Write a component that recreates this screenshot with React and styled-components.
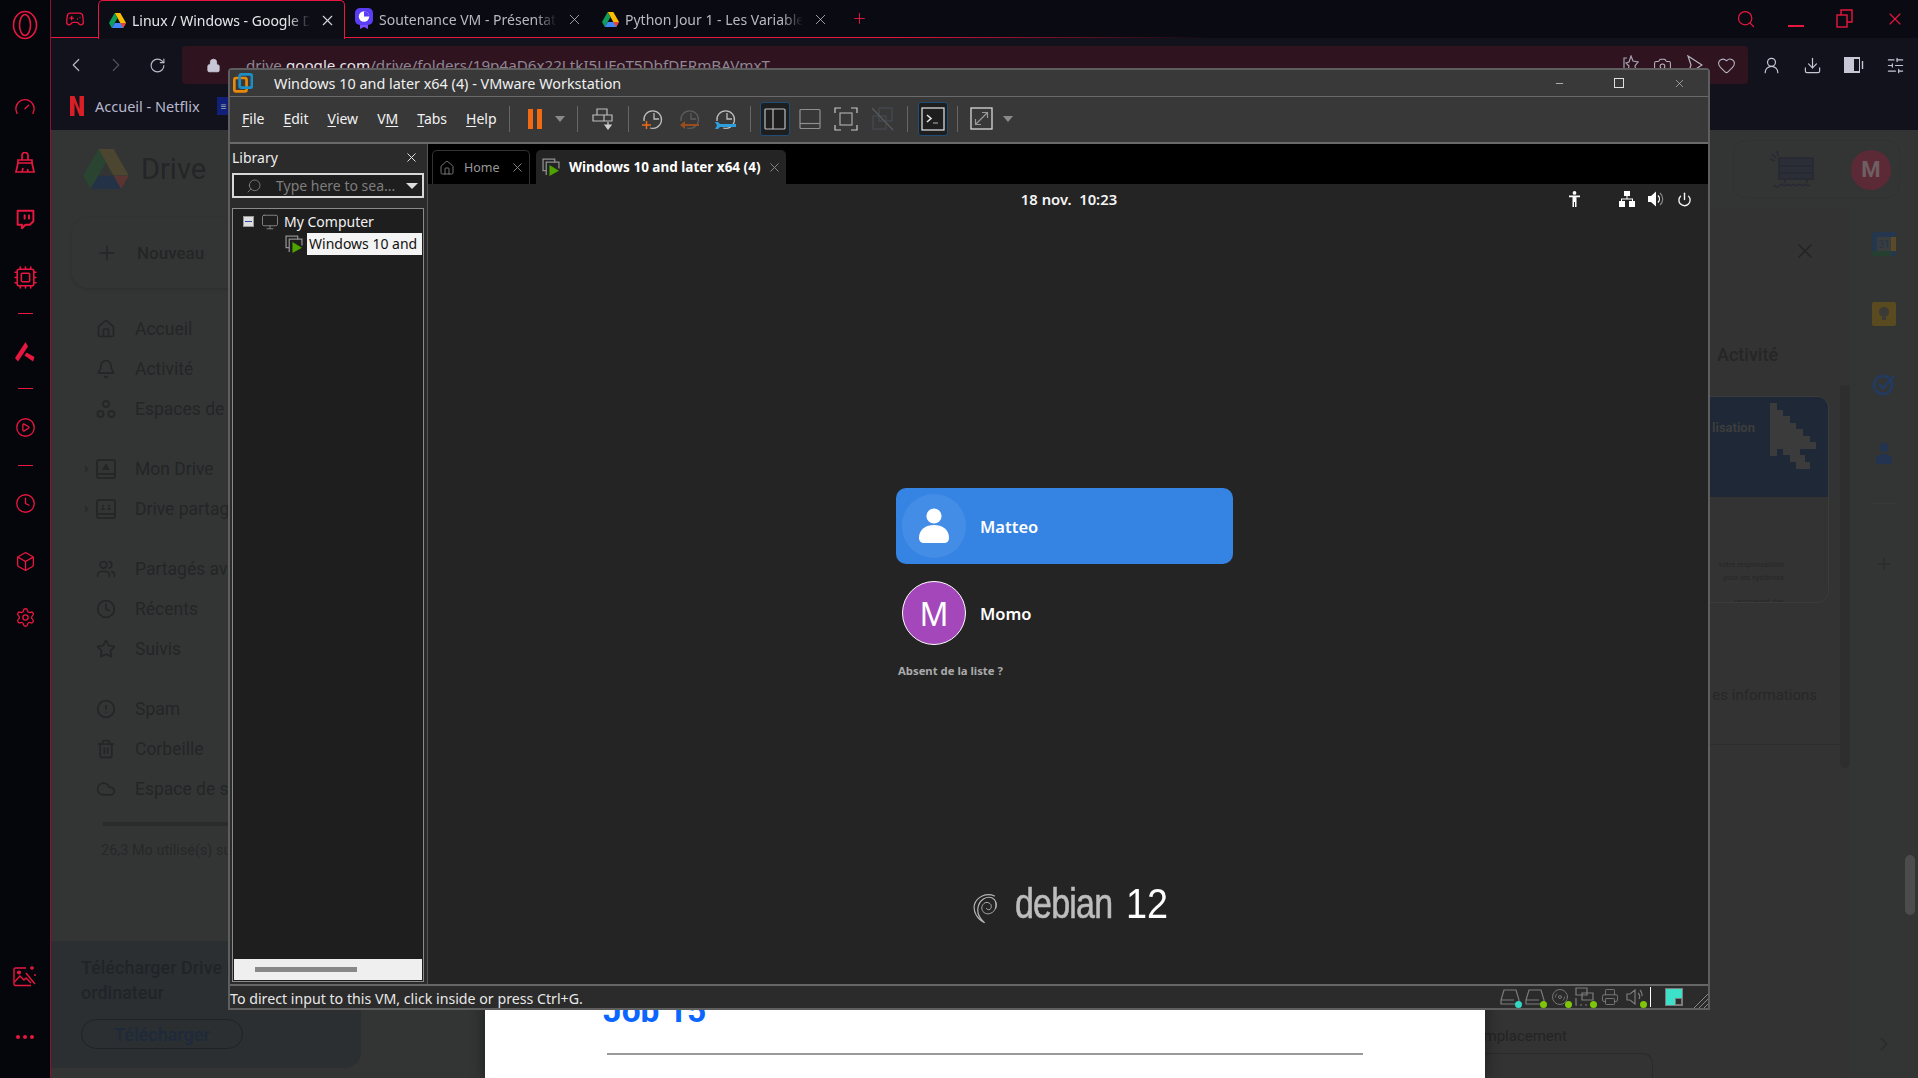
import React from 'react';
import styled, { createGlobalStyle } from 'styled-components';
import {
  Gamepad2, Gauge, Twitch, Cpu, CirclePlay, Clock, Box, Settings, Search, ChevronLeft, ChevronRight,
  RotateCw, Lock, Camera, Heart, UserRound, Download, SlidersHorizontal, X, Plus, Minus, Home as HomeIcon,
  Bell, Users, Star, CircleAlert, Trash2, Cloud, Power, Printer, Disc3, Monitor,
} from 'lucide-react';

const RED = '#e8173f';
const WIN = '"Noto Sans", "Open Sans", sans-serif';
const DIM = '#232526';

const Global = createGlobalStyle`
  html, body { margin: 0; padding: 0; height: 100%; background: #05050c; overflow: hidden; }
  * { box-sizing: border-box; }
`;

const Screen = styled.div`
  position: relative;
  width: 1918px;
  height: 1078px;
  display: flex;
  overflow: hidden;
  font-family: ${WIN};
`;

/* Opera GX rail */
const Rail = styled.aside`
  width: 51px;
  flex: none;
  display: flex;
  flex-direction: column;
  align-items: center;
  background: #05050c;
  border-right: 1px solid #8c1330;
  color: ${RED};
  padding-top: 13px;
`;

const RailItem = styled.div`
  height: 24px;
  display: flex;
  align-items: center;
  justify-content: center;
  flex: none;
  margin-top: ${(p) => p.$mt || 0}px;
`;

const RailDash = styled.div`
  width: 15px;
  height: 1px;
  flex: none;
  background: ${RED};
  margin-top: ${(p) => p.$mt || 0}px;
`;

const Browser = styled.div`
  flex: 1;
  min-width: 0;
  display: flex;
  flex-direction: column;
`;

const TabStrip = styled.div`
  height: 38px;
  flex: none;
  display: flex;
  align-items: stretch;
  background: #0a0a12;
  position: relative;
  border-bottom: 1px solid transparent;
  border-image: linear-gradient(90deg, ${RED} 0, ${RED} 45%, #0a0a12 62%) 1;
`;

const GameSlot = styled.div`
  width: 47px;
  display: flex;
  align-items: center;
  justify-content: center;
  color: ${RED};
`;

const Tab = styled.div`
  width: 247px;
  height: ${(p) => (p.$active ? '39px' : '38px')};
  display: flex;
  align-items: center;
  padding-left: 10px;
  font-size: 14px;
  color: ${(p) => (p.$active ? '#e6e6ea' : '#b9b9c2')};
  background: ${(p) => (p.$active ? '#0d0d16' : 'transparent')};
  border: ${(p) => (p.$active ? `1px solid ${RED}` : '0')};
  border-bottom: 0;
  border-radius: ${(p) => (p.$active ? '5px 5px 0 0' : '0')};
  position: relative;
  z-index: 1;
`;

const TabTitle = styled.span`
  width: 178px;
  margin-left: 6px;
  white-space: nowrap;
  overflow: hidden;
  -webkit-mask-image: linear-gradient(90deg, #000 88%, transparent);
  mask-image: linear-gradient(90deg, #000 88%, transparent);
`;

const TabClose = styled.span`
  display: flex;
  margin-left: 9px;
  color: #d8d8de;
`;

const NewTab = styled.div`
  display: flex;
  align-items: center;
  margin-left: 12px;
  color: ${RED};
`;

const WinControls = styled.div`
  margin-left: auto;
  display: flex;
  align-items: center;
  color: ${RED};
  padding-right: 13px;
  gap: 32px;
`;

const MinBar = styled.div`
  width: 16px;
  height: 2px;
  margin-top: 15px;
  background: ${RED};
`;

const NavRow = styled.div`
  height: 47px;
  flex: none;
  display: flex;
  align-items: center;
  background: #12121d;
  color: #c9c6d6;
  padding-left: 5px;
  padding-top: 7px;
`;

const NavBtn = styled.div`
  width: ${(p) => p.$w || 40}px;
  display: flex;
  justify-content: center;
  color: ${(p) => p.$c || '#b9b7c6'};
`;

const Omnibar = styled.div`
  width: 1566px;
  height: 38px;
  margin-left: 4px;
  display: flex;
  align-items: center;
  background: #2f131f;
  border-radius: 4px;
  padding-left: 24px;
  font-size: 15.200px;
  color: #8d8794;
  overflow: hidden;
`;

const UrlHost = styled.span`
  color: #e4e2e8;
`;

const UrlText = styled.span`
  margin-left: 25px;
  white-space: nowrap;
`;

const OmniIcons = styled.div`
  margin-left: auto;
  display: flex;
  align-items: center;
  gap: 14px;
  padding-right: 12px;
  color: #b9b7c6;
`;

const UserIcons = styled.div`
  display: flex;
  align-items: center;
  gap: 22px;
  padding-left: 14px;
  color: #c9c6d6;
`;

const Bookmarks = styled.div`
  height: 45px;
  flex: none;
  display: flex;
  align-items: center;
  background: #12121d;
  padding: 0 0 3px 19px;
  font-size: 14.500px;
  color: #b8b8cc;
`;

const NetflixN = styled.svg`
  width: 14px;
  height: 20px;
  margin-right: 11px;
`;

const BookmarkIcon = styled.div`
  width: 14px;
  height: 18px;
  margin-left: 17px;
  background: #12207a;
  color: #9aa;
  font-size: 10px;
  line-height: 18px;
  text-align: center;
`;

/* Dimmed Google Drive page */
const DrivePage = styled.div`
  flex: 1;
  min-height: 0;
  display: flex;
  flex-direction: column;
  background: #333535;
  font-family: Roboto, "Noto Sans", sans-serif;
  color: ${DIM};
`;

const DriveHeader = styled.header`
  height: 78px;
  flex: none;
  display: flex;
  align-items: flex-start;
  padding: 10px 18px 0 32px;
`;

const DriveLogo = styled.div`
  display: flex;
  align-items: center;
  gap: 12px;
  font-size: 29px;
  padding-top: 9px;
`;

const HeaderPill = styled.div`
  margin-left: auto;
  width: 167px;
  height: 58px;
  display: flex;
  align-items: center;
  justify-content: flex-end;
  gap: 34px;
  padding: 1px 8px 0 0;
  border: 1px solid #303232;
  border-radius: 12px;
`;

const Avatar = styled.div`
  width: 40px;
  height: 40px;
  border-radius: 50%;
  background: #5b2a36;
  color: #6f5f62;
  font-size: 22px;
  font-weight: 700;
  display: flex;
  align-items: center;
  justify-content: center;
`;

const DriveBody = styled.div`
  flex: 1;
  min-height: 0;
  display: flex;
`;

const DriveSide = styled.nav`
  width: 310px;
  flex: none;
  display: flex;
  flex-direction: column;
  padding-top: 10px;
  padding-bottom: 10px;
`;

const NewButton = styled.div`
  width: 190px;
  height: 70px;
  margin-left: 21px;
  margin-bottom: 21px;
  display: flex;
  align-items: center;
  gap: 18px;
  padding-left: 23px;
  border-radius: 16px;
  box-shadow: 0 1px 4px rgba(0, 0, 0, 0.15);
  font-size: 17px;
  font-weight: 500;
`;

const NavGroup = styled.div`
  margin-bottom: 20px;
`;

const NavItem = styled.div`
  position: relative;
  height: 40px;
  display: flex;
  align-items: center;
  gap: 19px;
  padding-left: 45px;
  font-size: 17.500px;
  white-space: nowrap;
  color: ${DIM};

  ${(p) => p.$caret && `
    &::before {
      content: '';
      position: absolute;
      left: 34px;
      top: 16px;
      border-left: 4px solid #2a2c2c;
      border-top: 4px solid transparent;
      border-bottom: 4px solid transparent;
    }
  `}
`;

const StorageBar = styled.div`
  height: 4px;
  width: 240px;
  margin: 13px 0 0 52px;
  background: #2a2c2c;
`;

const StorageText = styled.div`
  margin: 16px 0 0 50px;
  font-size: 14.500px;
  color: #262828;
  white-space: nowrap;
`;

const DownloadPanel = styled.div`
  margin-top: auto;
  height: 127px;
  padding: 14px 30px 0;
  background: #2b2f32;
  border-radius: 0 0 16px 0;
  font-size: 18px;
  font-weight: 500;
  line-height: 25px;
  color: #212427;
`;

const DownloadButton = styled.div`
  width: 162px;
  height: 30px;
  margin-top: 14px;
  border: 1px solid #1f2326;
  border-radius: 15px;
  display: flex;
  align-items: center;
  justify-content: center;
  color: #1e2a3a;
`;

const DocArea = styled.main`
  flex: 1;
  min-width: 0;
  display: flex;
  align-items: flex-end;
  padding-left: 124px;
`;

const DocPage = styled.div`
  position: relative;
  z-index: 1;
  width: 1000px;
  height: 100px;
  flex: none;
  background: #fff;
  box-shadow: 0 0 14px rgba(0, 0, 0, 0.45);
  padding-left: 118px;
`;

const DocTitle = styled.h1`
  margin: 0;
  height: 46px;
  font-family: Roboto, sans-serif;
  font-weight: 700;
  font-size: 33.500px;
  line-height: 66px;
  color: #0b66ff;
`;

const DocRule = styled.div`
  width: 756px;
  height: 2px;
  margin: 29px 0 0 4px;
  background: #9a9a9a;
`;

const Details = styled.aside`
  width: 365px;
  flex: none;
  display: flex;
  flex-direction: column;
  background: #333333;
`;

const DetailsTop = styled.div`
  display: flex;
  padding-left: 225px;
`;

const DetailsColumn = styled.div`
  width: 119px;
  flex: none;
`;

const DetailsClose = styled.div`
  height: 136px;
  padding: 31px 0 0 83px;
  color: #232323;
`;

const ActivityLabel = styled.div`
  padding-left: 7px;
  font-size: 18px;
  font-weight: 500;
  color: #262626;
  height: 52px;
`;

const ActivityCard = styled.div`
  height: 207px;
  border: 1px solid #3a3c3c;
  border-left: 0;
  border-radius: 0 12px 12px 0;
  overflow: hidden;
`;

const CardBanner = styled.div`
  height: 100px;
  display: flex;
  align-items: flex-start;
  background: #1e2836;
  border-radius: 0 8px 0 0;
  color: #3d3d3d;
  font-size: 13px;
  font-weight: 700;
  padding: 23px 0 0 2px;
  gap: 15px;
`;

const CursorSlot = styled.div`
  margin-top: -17px;
  display: flex;
`;

const CardText = styled.div`
  padding: 61px 44px 0 0;
  font-size: 7.500px;
  line-height: 13px;
  white-space: nowrap;
  text-align: right;
  color: #272727;
`;

const CardTextGap = styled.div`
  height: 11px;
`;

const InfoText = styled.div`
  margin-top: 83px;
  padding-right: 12px;
  font-size: 15px;
  text-align: right;
  white-space: nowrap;
  color: #272727;
`;

const InfoRule = styled.div`
  height: 1px;
  margin-top: 40px;
  margin-right: -11px;
  background: #2d2d2d;
`;

const DetailsTrack = styled.div`
  width: 10px;
  height: 383px;
  margin: 177px 0 0 11px;
  border-radius: 0 0 5px 5px;
  background: #2e2e2e;
`;

const PlacementFoot = styled.div`
  margin-top: auto;
  font-size: 15px;
  color: #232323;
`;

const PlacementLabel = styled.div`
  margin-left: -10px;
  height: 26px;
`;

const PlacementBox = styled.div`
  width: 168px;
  height: 25px;
  border: 1px solid #2a2a2a;
  border-bottom: 0;
  border-left: 0;
  border-radius: 0 10px 0 0;
`;

const RightRail = styled.div`
  flex: none;
  width: 68px;
  position: relative;
  display: flex;
  flex-direction: column;
  align-items: center;
  padding: 17px 0 0 0;
  background: #323534;
`;

const RailSlot = styled.div`
  height: 38px;
  margin-bottom: 32px;
  display: flex;
  align-items: center;
  justify-content: center;
`;

const RailRule = styled.div`
  width: 24px;
  height: 1px;
  background: #383a3a;
  margin: -2px 0 50px;
`;

const RailChevron = styled.div`
  margin-top: auto;
  margin-bottom: 19px;
  color: #2a2c2c;
`;

const PageThumb = styled.div`
  position: absolute;
  right: 3px;
  top: 647px;
  width: 10px;
  height: 60px;
  border-radius: 5px;
  background: #4a4d4c;
`;

/* VMware window */
const VmWindow = styled.section`
  position: absolute;
  left: 228px;
  top: 68px;
  width: 1482px;
  height: 942px;
  display: flex;
  flex-direction: column;
  background: #2b2b2b;
  border: 2px solid #5e5e5e;
  border-radius: 4px 4px 0 0;
  color: #eee;
  font-family: ${WIN};
  z-index: 3;
`;

const TitleBar = styled.div`
  height: 27px;
  flex: none;
  display: flex;
  align-items: center;
  background: #393939;
  border-bottom: 1px solid #6a6a6a;
  font-size: 14.400px;
  padding-left: 3px;
  color: #f0f0f0;
`;

const WinTitle = styled.span`
  margin-left: 21px;
`;

const TitleControls = styled.div`
  margin-left: auto;
  display: flex;
  align-items: center;
  gap: 49px;
  padding-right: 22px;
  color: #e0e0e0;
`;

const Toolbar = styled.div`
  height: 47px;
  flex: none;
  display: flex;
  align-items: center;
  padding-bottom: 2px;
  background: #383838;
  border-bottom: 2px solid #6a6a6a;
`;

const MenuList = styled.div`
  display: flex;
  gap: 19px;
  padding-left: 12px;
  font-size: 14px;
  color: #f2f2f2;
`;

const MenuLetter = styled.span`
  text-decoration: underline;
  text-underline-offset: 2px;
`;

const ToolSep = styled.div`
  width: 1px;
  height: 26px;
  background: #666;
  flex: none;
  margin-left: ${(p) => p.$ml}px;
`;

const ToolSlot = styled.div`
  width: ${(p) => p.$w}px;
  height: ${(p) => (p.$on ? 34 : 24)}px;
  margin-left: ${(p) => p.$ml}px;
  flex: none;
  display: flex;
  align-items: center;
  justify-content: center;
  background: ${(p) => (p.$on ? '#1e1e1e' : 'transparent')};
  border: ${(p) => (p.$on ? '1px solid #1f4d75' : '0')};
  border-radius: 3px;
`;

const WorkArea = styled.div`
  flex: 1;
  min-height: 0;
  display: flex;
`;

const Library = styled.div`
  width: 198px;
  flex: none;
  display: flex;
  flex-direction: column;
  padding: 0 2px 2px 2px;
  background: #2b2b2b;
  border-right: 1px solid #555;
`;

const LibraryHead = styled.div`
  height: 29px;
  flex: none;
  display: flex;
  align-items: center;
  justify-content: space-between;
  padding: 0 6px 2px 0;
  font-size: 14px;
  color: #eee;
`;

const LibSearch = styled.div`
  height: 25px;
  width: 192px;
  flex: none;
  display: flex;
  align-items: center;
  background: #1e1e1e;
  border: 2px solid #d8d8d8;
  padding-left: 12px;
  font-size: 14px;
  color: #7d7d7d;
`;

const SearchHint = styled.span`
  margin-left: 14px;
  white-space: nowrap;
`;

const Caret = styled.div`
  margin-left: auto;
  margin-right: ${(p) => (p.$c ? 0 : 4)}px;
  width: 0;
  height: 0;
  border-left: ${(p) => (p.$c ? 5 : 6)}px solid transparent;
  border-right: ${(p) => (p.$c ? 5 : 6)}px solid transparent;
  border-top: 6px solid ${(p) => p.$c || '#ddd'};
`;

const TreeBox = styled.div`
  flex: 1;
  width: 192px;
  margin-top: 10px;
  display: flex;
  flex-direction: column;
  background: #1e1e1e;
  border: 1px solid #8a8a8a;
  padding: 1px;
`;

const TreeRows = styled.div`
  flex: 1;
`;

const TreeRoot = styled.div`
  height: 23px;
  display: flex;
  align-items: center;
  padding-left: 9px;
  font-size: 14px;
  color: #f2f2f2;
  gap: 5px;
`;

const Expander = styled.div`
  width: 11px;
  height: 11px;
  background: #dfdfdf;
  border: 1px solid #999;
  display: flex;
  align-items: center;
  justify-content: center;
  margin-right: 2px;
`;

const ExpanderBar = styled.div`
  width: 7px;
  height: 1px;
  background: #2b4fa8;
`;

const TreeChild = styled.div`
  height: 22px;
  display: flex;
  align-items: center;
  padding-left: 51px;
  font-size: 14px;
`;

const TreeSelected = styled.div`
  flex: 1;
  height: 22px;
  margin-left: 4px;
  background: #f4f4f4;
  color: #111;
  padding-left: 2px;
  line-height: 22px;
  white-space: nowrap;
`;

const TreeScroll = styled.div`
  height: 21px;
  flex: none;
  background: #efefef;
  display: flex;
  align-items: center;
  padding-left: 21px;
`;

const TreeThumb = styled.div`
  width: 102px;
  height: 5px;
  background: #888;
`;

const VmView = styled.div`
  flex: 1;
  min-width: 0;
  display: flex;
  flex-direction: column;
  background: #000;
`;

const VmTabs = styled.div`
  height: 40px;
  flex: none;
  display: flex;
  align-items: flex-end;
  gap: 6px;
  padding-left: 4px;
`;

const VmTab = styled.div`
  height: 34px;
  width: ${(p) => p.$w}px;
  display: flex;
  align-items: center;
  padding-left: 6px;
  border-radius: 5px 5px 0 0;
  background: ${(p) => (p.$active ? '#242424' : '#000')};
  border: ${(p) => (p.$active ? '0' : '1px solid #333')};
  border-bottom: 0;
  font-size: ${(p) => (p.$active ? 13.5 : 12.5)}px;
  font-weight: ${(p) => (p.$active ? 700 : 400)};
  color: ${(p) => (p.$active ? '#fff' : '#999')};
  white-space: nowrap;
`;

const VmTabLabel = styled.span`
  margin-left: 9px;
`;

const VmTabClose = styled.span`
  display: flex;
  margin-left: auto;
  margin-right: 4px;
  color: #8c8c8c;
`;

const Guest = styled.div`
  flex: 1;
  min-height: 0;
  display: flex;
  flex-direction: column;
  background: #242424;
  font-family: "Noto Sans", sans-serif;
`;

const GuestBar = styled.div`
  height: 30px;
  flex: none;
  display: grid;
  grid-template-columns: 1fr auto 1fr;
  align-items: center;
  color: #f5f5f5;
`;

const ClockText = styled.div`
  font-size: 14.800px;
  font-weight: 600;
  grid-column: 2;
  white-space: pre;
  padding-left: 2px;
`;

const GuestTray = styled.div`
  grid-column: 3;
  justify-self: end;
  display: flex;
  align-items: center;
  padding-right: 16px;
  gap: 13px;
`;

const TrayPerson = styled.div`
  display: flex;
  margin-right: 26px;
`;

const LoginList = styled.div`
  width: 337px;
  margin: 274px 0 0 468px;
`;

const UserCard = styled.div`
  height: 76px;
  display: flex;
  align-items: center;
  gap: 14px;
  padding-left: 6px;
  border-radius: 10px;
  background: ${(p) => (p.$active ? '#3584e4' : 'transparent')};
  margin-bottom: ${(p) => (p.$active ? 11 : 0)}px;
  font-size: 16.500px;
  font-weight: 600;
  color: #fff;
`;

const UserFace = styled.div`
  width: 64px;
  height: 64px;
  flex: none;
  border-radius: 50%;
  display: flex;
  align-items: center;
  justify-content: center;
  background: ${(p) => (p.$c ? p.$c : 'rgba(255,255,255,0.08)')};
  border: ${(p) => (p.$c ? '1.5px solid #fff' : '0')};
  font-size: 32px;
  font-weight: 400;
`;

const NotListed = styled.div`
  margin: 12px 0 0 2px;
  font-size: 11.300px;
  font-weight: 700;
  color: #aaa;
`;

const DebianMark = styled.div`
  margin: auto 0 59px 545px;
  display: flex;
  align-items: flex-end;
  line-height: 1;
  font-family: "Liberation Sans", sans-serif;
  font-size: 43px;
`;

const DebianWord = styled.span`
  display: inline-block;
  margin-left: 16px;
  margin-right: -26px;
  color: #bdbdbd;
  letter-spacing: -1px;
  -webkit-text-stroke: 0.6px #bdbdbd;
  transform: scaleX(0.79);
  transform-origin: left center;
`;

const DebianNum = styled.span`
  display: inline-block;
  margin-left: 14px;
  color: #fff;
  transform: scaleX(0.88);
  transform-origin: left center;
`;

const StatusBar = styled.div`
  height: 24px;
  flex: none;
  display: flex;
  align-items: center;
  border-top: 2px solid #666;
  background: #2b2b2b;
  font-size: 14.200px;
  color: #e8e8e8;
  position: relative;
`;

const StatusMsg = styled.span`
  white-space: nowrap;
  padding-top: 2px;
`;

const StatusIcons = styled.div`
  margin-left: auto;
  display: flex;
  align-items: center;
  gap: 5px;
  padding-right: 25px;
  color: #7c7c7c;
`;

const DeviceIcon = styled.div`
  position: relative;
  width: 20px;
  height: 20px;
  display: flex;
  align-items: center;
  justify-content: center;
`;

const DeviceDot = styled.span`
  position: absolute;
  right: -2px;
  bottom: -1px;
  width: 7px;
  height: 7px;
  border-radius: 50%;
  background: ${(p) => p.$c || '#7fc60a'};
`;

const StatusSep = styled.div`
  width: 1px;
  height: 20px;
  background: #fff;
  margin: 0 9px 0 0;
`;

const NoteSquare = styled.div`
  position: relative;
  width: 18px;
  height: 18px;
  background: #3de0c8;
  border: 1px solid #7c7c7c;

  &::after {
    content: '';
    position: absolute;
    right: 0;
    bottom: 0;
    width: 5px;
    height: 5px;
    background: #2b2b2b;
    border: 1px solid #7c7c7c;
  }
`;

const Grip = styled.svg`
  position: absolute;
  right: 0;
  bottom: 0;
`;

const DriveGlyph = ({ size = 46 }) => (
  <svg width={size} height={size * 0.87} viewBox="0 0 48 42">
    <path d="M16 0h16l16 28H32z" fill="#4c4630" />
    <path d="M16 0 0 28l8 14 16-28z" fill="#2a4432" />
    <path d="M8 42h32l8-14H16z" fill="#243247" />
    <path d="M48 28l-8 14-8-14z" fill="#5a3430" />
  </svg>
);

const SmallDrive = () => (
  <svg width="17" height="15" viewBox="0 0 48 42">
    <path d="M16 0h16l16 28H32z" fill="#fbbc04" />
    <path d="M16 0 0 28l8 14 16-28z" fill="#0f9d58" />
    <path d="M8 42h32l8-14H16z" fill="#4285f4" />
    <path d="M48 28l-8 14-8-14z" fill="#ea4335" />
  </svg>
);

const SlidesBadge = () => (
  <svg width="18" height="22" viewBox="0 0 18 22">
    <path d="M5 15v6l4-2 4 2v-6z" fill="#7a4dff" />
    <rect x="0" y="0" width="18" height="17" rx="5" fill="#5b3df5" />
    <circle cx="9" cy="8.5" r="5.2" fill="#fff" />
    <path d="M9 8.5V3.3a5.2 5.2 0 0 1 5.2 5.2z" fill="#5b3df5" />
  </svg>
);

const OperaLogo = () => (
  <svg width="26" height="30" viewBox="0 0 26 30" fill="none" stroke={RED} strokeWidth="1.6">
    <ellipse cx="13" cy="15" rx="11.5" ry="13.5" />
    <ellipse cx="13" cy="15" rx="5.5" ry="10.5" />
  </svg>
);

const BroomIcon = () => (
  <svg width="22" height="22" viewBox="0 0 22 22" fill="none" stroke={RED} strokeWidth="1.7">
    <path d="M8 8V3.5a3 3 0 0 1 6 0V8" />
    <path d="M4 8h14v3H4z" />
    <path d="M4 11 2 20h18l-2-9" />
    <path d="M8 20l1-4M14 20l-.5-3" />
  </svg>
);

const ArrowMark = () => (
  <svg width="20" height="20" viewBox="0 0 20 20" fill={RED}>
    <path d="M10.5 0 0 16l3 3.6L13 4.5z" />
    <path d="M11.5 10.5 19.5 15l-1.5 4.5-8.5-6z" />
  </svg>
);

const PhotoIcon = () => (
  <svg width="24" height="22" viewBox="0 0 24 22" fill="none" stroke={RED} strokeWidth="1.4">
    <path d="M13 3H2.5A1.5 1.5 0 0 0 1 4.5V19a1.5 1.5 0 0 0 1.5 1.5H18" />
    <path d="M1.5 17 7 11l4 4 2-2 5 5" />
    <circle cx="6" cy="7.5" r="1.4" fill={RED} />
    <path d="M13 8l9 11M19 1v4M17 3h4M22 9v2" />
  </svg>
);

const Dots = () => (
  <svg width="18" height="4" viewBox="0 0 18 4" fill={RED}>
    <circle cx="2" cy="2" r="2" />
    <circle cx="9" cy="2" r="2" />
    <circle cx="16" cy="2" r="2" />
  </svg>
);

const RestoreIcon = () => (
  <svg width="17" height="19" viewBox="0 0 17 19" fill="none" stroke={RED} strokeWidth="1.4">
    <rect x="1" y="6" width="10" height="12" />
    <path d="M5 6V1h11v12h-5" />
  </svg>
);

const MiniMark = ({ children, w = 20, h = 20 }) => (
  <svg width={w} height={h} viewBox={`0 0 ${w} ${h}`} fill="none">{children}</svg>
);

const StarPin = () => (
  <MiniMark w={16} h={20}>
    <path d="M4 3H1v15h8M8 1l2 5 5 1-3 4 1 6-5-3-3 2 1-5-3-3 3-1z" stroke="#a5a3b2" strokeWidth="1.2" />
  </MiniMark>
);

const SendMark = () => (
  <MiniMark w={17} h={20}>
    <path d="M2 1l14 9-14 9 3-9z" stroke="#b9b7c6" strokeWidth="1.2" />
  </MiniMark>
);

const BatteryCam = () => (
  <MiniMark w={20} h={18}>
    <rect x="0" y="1" width="16" height="16" fill="#c9c6d6" />
    <rect x="10" y="3" width="5" height="12" fill="#12121d" />
    <path d="M18.5 5v8" stroke="#c9c6d6" strokeWidth="1.4" />
  </MiniMark>
);

const VmwareLogo = () => (
  <svg width="20" height="20" viewBox="0 0 18 18" fill="none" strokeWidth="2.4">
    <rect x="1.2" y="4.5" width="11" height="12" rx="1.5" stroke="#e8890c" />
    <rect x="6" y="1.2" width="11" height="12" rx="1.5" stroke="#1c8fc7" />
  </svg>
);

const GuestIcon = () => (
  <svg width="18" height="18" viewBox="0 0 17 17" fill="none">
    <path d="M4 12H1V1h11v3" stroke="#8f8f8f" strokeWidth="1.2" />
    <path d="M4 16V4h12v6" stroke="#8f8f8f" strokeWidth="1.2" />
    <path d="M7 6.500 16 12l-9 5z" fill="#4fa300" />
  </svg>
);

const PauseGlyph = () => (
  <svg width="14" height="20" viewBox="0 0 14 20" fill="#f06a14">
    <rect x="0" y="0" width="5" height="20" />
    <rect x="9" y="0" width="5" height="20" />
  </svg>
);

const SendKeys = () => (
  <MiniMark w={22} h={22}>
    <path d="M5 1h10v6H5zM1 7h19v6H1zM12 7v6" stroke="#bdbdbd" strokeWidth="1.2" />
    <path d="M16 14v5M13 17l3 4 3-4z" stroke="#d0d0d0" strokeWidth="1.2" fill="#d0d0d0" />
  </MiniMark>
);

const SnapClock = ({ arrow, wrench, plus, dim }) => (
  <MiniMark w={24} h={22}>
    <path d="M3 13a8.800 8.800 0 1 1 6 7M13 5v6h5" stroke={dim ? '#5c5c5c' : '#bdbdbd'} strokeWidth="1.3" />
    {plus && <path d="M1 17h9M5.500 13v8" stroke="#f06a14" strokeWidth="1.5" />}
    {arrow && <path d="M2 17l5-4v3h14v2H7v3z" fill="#9a4d1c" />}
    {wrench && <path d="M1 14h3l2 2h16v3H6l-2 2H1l2-3.500z" fill="#2e9fdd" />}
  </MiniMark>
);

const ViewSplit = () => (
  <MiniMark w={22} h={22}>
    <rect x="1" y="1" width="20" height="20" rx="1" stroke="#bdbdbd" strokeWidth="1.2" />
    <path d="M9 1v20" stroke="#bdbdbd" strokeWidth="1.2" />
  </MiniMark>
);

const ViewBottom = () => (
  <MiniMark w={22} h={22}>
    <rect x="1" y="1.500" width="20" height="19" rx="1" stroke="#8f8f8f" strokeWidth="1.2" />
    <path d="M1 15.500h20" stroke="#8f8f8f" strokeWidth="1.2" />
  </MiniMark>
);

const ViewFit = () => (
  <MiniMark w={24} h={24}>
    <path d="M1 6V1h6M17 1h6v5M23 18v5h-6M7 23H1v-5" stroke="#c8c8c8" strokeWidth="1.2" />
    <rect x="6" y="6" width="12" height="12" stroke="#a8a8a8" strokeWidth="1.2" />
  </MiniMark>
);

const ViewOff = () => (
  <MiniMark w={24} h={24}>
    <rect x="8" y="1" width="13" height="13" stroke="#454a50" strokeWidth="1.2" />
    <rect x="2" y="9" width="13" height="13" stroke="#454a50" strokeWidth="1.2" />
    <path d="M1 1l21 22" stroke="#5a5a5a" strokeWidth="1.2" />
  </MiniMark>
);

const ConsoleGlyph = () => (
  <MiniMark w={24} h={24}>
    <rect x="1" y="1" width="22" height="22" stroke="#e8e8e8" strokeWidth="1.2" />
    <path d="M6 8l4 3.500L6 15" stroke="#e8e8e8" strokeWidth="1.6" />
    <path d="M12 16h5" stroke="#9a9a9a" strokeWidth="1.2" />
  </MiniMark>
);

const FullScreen = () => (
  <MiniMark w={23} h={23}>
    <rect x="1" y="1" width="21" height="21" stroke="#d8d8d8" strokeWidth="1.3" />
    <path d="M6 17 17 6M12 5.500h5.500V11M5.500 12v5.500H11" stroke="#9a9a9a" strokeWidth="1.2" />
  </MiniMark>
);

const PersonGlyph = () => (
  <svg width="11" height="16" viewBox="0 0 11 16" fill="#fff">
    <circle cx="5.5" cy="1.9" r="1.9" />
    <path d="M0 4.500h11v1.800H7.500V16H6V11H5v5H3.500V6.300H0z" />
  </svg>
);

const NetGlyph = () => (
  <svg width="16" height="16" viewBox="0 0 16 16" fill="#fff">
    <rect x="5" y="0" width="6" height="5" />
    <path d="M7.500 5h1v2.500H14V10h-1V8.500H3V10H2V7.500h5.500z" />
    <rect x="0" y="10" width="6" height="6" />
    <rect x="10" y="10" width="6" height="6" />
  </svg>
);

const SpeakerGlyph = () => (
  <svg width="16" height="16" viewBox="0 0 16 16" fill="#fff">
    <path d="M0 5h3l5-4.500v15L3 11H0z" />
    <path d="M10 4.500a5 5 0 0 1 0 7" fill="none" stroke="#fff" strokeWidth="1.3" />
    <path d="M12 2a8 8 0 0 1 0 12" fill="none" stroke="#888" strokeWidth="1.2" />
  </svg>
);

const DebianSwirl = () => (
  <svg width="26" height="33" viewBox="0 0 29 34" fill="none" stroke="#b5b5b5" strokeWidth="1.3" strokeLinecap="round">
    <path d="M24 3C15-1 4 4 1.500 13 0 21 5 29 13 33 7 28 4 21 6 14 8 7 15 3 21 5c5 2 6 8 4 12" />
    <path d="M25 10c2 6-1 12-8 13-5 0-8-4-7-8 1-4 5-6 8-4 3 1 3 5 1 7-2 1-3 0-4-1" strokeWidth="1" />
  </svg>
);

const PersonFace = () => (
  <svg width="30" height="36" viewBox="0 0 30 36" fill="#fff">
    <circle cx="15" cy="8" r="7.6" />
    <path d="M0 30c0-9 7-13 15-13s15 4 15 13c0 3-2 5-5 5H5c-3 0-5-2-5-5z" />
  </svg>
);

const ServerArt = () => (
  <svg width="48" height="38" viewBox="0 0 48 38" fill="none" stroke="#272a33" strokeWidth="1.6">
    <path d="M1 8l5 2M3 3l4 4M8 0l1 5" />
    <rect x="10" y="7" width="34" height="8" fill="#2b2e36" />
    <rect x="10" y="15" width="34" height="7" fill="#2b2e36" />
    <rect x="10" y="22" width="34" height="6" fill="#2b2e36" />
    <path d="M16 28v4M38 28v4M5 34c3 3 3 3 6 0s3 3 6 0 3 3 6 0 3 3 6 0 3 3 6 0 3 3 6 0" />
  </svg>
);

const CursorArt = () => (
  <svg width="46" height="73" viewBox="0 0 46 73" fill="#3b3b3b">
    <path d="M0 0h7v7h6v6h7v7h6v6h7v7h7v6h6v7H30v6h5v7h5v7H26v-7h-6v-7h-7v-6H7v7H0z" />
  </svg>
);

const CalendarMini = () => (
  <svg width="24" height="24" viewBox="0 0 24 24">
    <rect width="24" height="24" rx="2" fill="#24374f" />
    <rect x="5" y="5" width="14" height="14" fill="#3a3d3e" />
    <rect y="19" width="19" height="5" fill="#254030" />
    <rect x="19" y="5" width="5" height="14" fill="#5a4a26" />
    <text x="12" y="16" fontSize="10" textAnchor="middle" fill="#25344a" fontFamily="Roboto">31</text>
  </svg>
);

const KeepMini = () => (
  <svg width="24" height="24" viewBox="0 0 24 24">
    <rect width="24" height="24" rx="2" fill="#5a4a1f" />
    <circle cx="12" cy="10" r="5" fill="#3a3a36" />
    <rect x="10" y="15" width="4" height="3" fill="#3a3a36" />
  </svg>
);

const TasksMini = () => (
  <svg width="24" height="24" viewBox="0 0 24 24" fill="none" stroke="#243a5e" strokeWidth="3">
    <circle cx="11" cy="13" r="9" />
    <path d="M7 12l4 4 11-12" />
  </svg>
);

const ContactMini = () => (
  <svg width="18" height="22" viewBox="0 0 18 22" fill="#22344f">
    <circle cx="9" cy="4.500" r="4.500" />
    <path d="M1 21v-5c0-3 4-5 8-5s8 2 8 5v5z" />
  </svg>
);

const HddGlyph = () => (
  <MiniMark w={20} h={16}>
    <path d="M4 1h12l3 10v4H1v-4zM1 11h13" stroke="#7c7c7c" strokeWidth="1.2" />
  </MiniMark>
);

const NetBoxes = () => (
  <MiniMark w={20} h={20}>
    <path d="M1 1h11v7H1zM7 6h11v7H7zM1 11v7h1M5 18h2M10 18h2" stroke="#7c7c7c" strokeWidth="1.2" />
  </MiniMark>
);

const SpeakerSmall = () => (
  <MiniMark w={18} h={16}>
    <path d="M1 5h3l5-4v14l-5-4H1zM12 4a5 5 0 0 1 1 6M14 1a8 8 0 0 1 2 6" stroke="#7c7c7c" strokeWidth="1.2" />
  </MiniMark>
);

const CirclesGlyph = () => (
  <MiniMark w={20} h={20}>
    <circle cx="10" cy="5" r="3" stroke="#252727" strokeWidth="2" />
    <circle cx="4.500" cy="15" r="3" stroke="#252727" strokeWidth="2" />
    <circle cx="15.500" cy="15" r="3" stroke="#252727" strokeWidth="2" />
  </MiniMark>
);

const BookGlyph = ({ people }) => (
  <MiniMark w={20} h={20}>
    <rect x="1" y="1" width="18" height="18" rx="2" stroke="#252727" strokeWidth="2" />
    <path d="M1 15h18" stroke="#252727" strokeWidth="2" />
    {people
      ? <path d="M5 11c0-3 4-3 4 0zM11 11c0-3 4-3 4 0zM6 6h2v2H6zM12 6h2v2h-2z" fill="#252727" />
      : <path d="M10 4l4 7H6z" fill="#252727" />}
  </MiniMark>
);

export default function App() {
  return (
    <Screen>
      <Global />
      <Rail>
        <RailItem><OperaLogo /></RailItem>
        <RailItem $mt={58}><Gauge size={22} strokeWidth={1.5} /></RailItem>
        <RailItem $mt={32}><BroomIcon /></RailItem>
        <RailItem $mt={32}><Twitch size={21} strokeWidth={2.2} /></RailItem>
        <RailItem $mt={34}><Cpu size={25} strokeWidth={1.5} /></RailItem>
        <RailDash $mt={24} />
        <RailItem $mt={26}><ArrowMark /></RailItem>
        <RailDash $mt={24} />
        <RailItem $mt={26}><CirclePlay size={21} strokeWidth={1.5} /></RailItem>
        <RailDash $mt={26} />
        <RailItem $mt={25}><Clock size={21} strokeWidth={1.5} /></RailItem>
        <RailItem $mt={34}><Box size={21} strokeWidth={1.5} /></RailItem>
        <RailItem $mt={32}><Settings size={21} strokeWidth={1.5} /></RailItem>
        <RailItem $mt={335}><PhotoIcon /></RailItem>
        <RailItem $mt={37}><Dots /></RailItem>
      </Rail>
      <Browser>
        <TabStrip>
          <GameSlot><Gamepad2 size={20} strokeWidth={1.6} /></GameSlot>
          <Tab $active>
            <SmallDrive />
            <TabTitle>Linux / Windows - Google Drive</TabTitle>
            <TabClose><X size={17} strokeWidth={1.5} /></TabClose>
          </Tab>
          <Tab>
            <SlidesBadge />
            <TabTitle>Soutenance VM - Présentation</TabTitle>
            <TabClose><X size={17} strokeWidth={1} /></TabClose>
          </Tab>
          <Tab>
            <SmallDrive />
            <TabTitle>Python Jour 1 - Les Variables</TabTitle>
            <TabClose><X size={17} strokeWidth={1} /></TabClose>
          </Tab>
          <NewTab><Plus size={17} strokeWidth={1.3} /></NewTab>
          <WinControls>
            <Search size={20} strokeWidth={1.5} />
            <MinBar />
            <RestoreIcon />
            <X size={20} strokeWidth={1.3} />
          </WinControls>
        </TabStrip>
        <NavRow>
          <NavBtn><ChevronLeft size={22} strokeWidth={1.3} /></NavBtn>
          <NavBtn $c="#4f4e58"><ChevronRight size={22} strokeWidth={1.3} /></NavBtn>
          <NavBtn $w={42}><RotateCw size={17} strokeWidth={1.6} /></NavBtn>
          <Omnibar>
            <Lock size={15} fill="#c9c6d6" strokeWidth={1.5} color="#c9c6d6" />
            <UrlText>
              drive.<UrlHost>google.com</UrlHost>/drive/folders/19p4aD6x22LtkI5UFoT5DbfDERmBAVmxT
            </UrlText>
            <OmniIcons>
              <StarPin />
              <Camera size={19} strokeWidth={1.3} />
              <SendMark />
              <Heart size={19} strokeWidth={1.3} />
            </OmniIcons>
          </Omnibar>
          <UserIcons>
            <UserRound size={19} strokeWidth={1.5} />
            <Download size={19} strokeWidth={1.5} />
            <BatteryCam />
            <SlidersHorizontal size={19} strokeWidth={1.5} />
          </UserIcons>
        </NavRow>
        <Bookmarks>
          <NetflixN viewBox="0 0 14 20">
            <path d="M0 0h4.500l5 13V0H14v20H9.500l-5-13v13H0z" fill="#d81f26" />
          </NetflixN>
          Accueil - Netflix
          <BookmarkIcon>≡</BookmarkIcon>
        </Bookmarks>
        <DrivePage>
          <DriveHeader>
            <DriveLogo><DriveGlyph />Drive</DriveLogo>
            <HeaderPill><ServerArt /><Avatar>M</Avatar></HeaderPill>
          </DriveHeader>
          <DriveBody>
            <DriveSide>
              <NewButton><Plus size={24} strokeWidth={1.5} />Nouveau</NewButton>
              <NavGroup>
                <NavItem><HomeIcon size={20} />Accueil</NavItem>
                <NavItem><Bell size={20} />Activité</NavItem>
                <NavItem><CirclesGlyph />Espaces de travail</NavItem>
              </NavGroup>
              <NavGroup>
                <NavItem $caret><BookGlyph />Mon Drive</NavItem>
                <NavItem $caret><BookGlyph people />Drive partagés</NavItem>
              </NavGroup>
              <NavGroup>
                <NavItem><Users size={20} />Partagés avec moi</NavItem>
                <NavItem><Clock size={20} />Récents</NavItem>
                <NavItem><Star size={20} />Suivis</NavItem>
              </NavGroup>
              <NavItem><CircleAlert size={20} />Spam</NavItem>
              <NavItem><Trash2 size={20} />Corbeille</NavItem>
              <NavItem><Cloud size={20} />Espace de stockage</NavItem>
              <StorageBar />
              <StorageText>26,3 Mo utilisé(s) sur 15 Go</StorageText>
              <DownloadPanel>
                Télécharger Drive pour<br />ordinateur
                <DownloadButton>Télécharger</DownloadButton>
              </DownloadPanel>
            </DriveSide>
            <DocArea>
              <DocPage>
                <DocTitle>Job 15</DocTitle>
                <DocRule />
              </DocPage>
            </DocArea>
            <Details>
              <DetailsTop>
                <DetailsColumn>
                  <DetailsClose><X size={24} strokeWidth={1.5} /></DetailsClose>
                  <ActivityLabel>Activité</ActivityLabel>
                  <ActivityCard>
                    <CardBanner>
                      <span>lisation</span>
                      <CursorSlot><CursorArt /></CursorSlot>
                    </CardBanner>
                    <CardText>
                      votre responsabilité<br />pour les systèmes
                      <CardTextGap />
                      récupérant des
                    </CardText>
                  </ActivityCard>
                  <InfoText>es informations</InfoText>
                  <InfoRule />
                </DetailsColumn>
                <DetailsTrack />
              </DetailsTop>
              <PlacementFoot>
                <PlacementLabel>Emplacement</PlacementLabel>
                <PlacementBox />
              </PlacementFoot>
            </Details>
            <RightRail>
              <RailSlot><CalendarMini /></RailSlot>
              <RailSlot><KeepMini /></RailSlot>
              <RailSlot><TasksMini /></RailSlot>
              <RailSlot><ContactMini /></RailSlot>
              <RailRule />
              <Plus size={20} color="#2a2c2c" strokeWidth={1.5} />
              <RailChevron><ChevronRight size={22} strokeWidth={1.5} /></RailChevron>
              <PageThumb />
            </RightRail>
          </DriveBody>
        </DrivePage>
      </Browser>

      <VmWindow>
        <TitleBar>
          <VmwareLogo />
          <WinTitle>Windows 10 and later x64 (4) - VMware Workstation</WinTitle>
          <TitleControls>
            <Minus size={11} strokeWidth={1.5} />
            <svg width="10" height="10" viewBox="0 0 10 10" fill="none" stroke="#e0e0e0"><rect x=".5" y=".5" width="9" height="9" /></svg>
            <X size={13} strokeWidth={1} />
          </TitleControls>
        </TitleBar>
        <Toolbar>
          <MenuList>
            <span><MenuLetter>F</MenuLetter>ile</span>
            <span><MenuLetter>E</MenuLetter>dit</span>
            <span><MenuLetter>V</MenuLetter>iew</span>
            <span>V<MenuLetter>M</MenuLetter></span>
            <span><MenuLetter>T</MenuLetter>abs</span>
            <span><MenuLetter>H</MenuLetter>elp</span>
          </MenuList>
          <ToolSep $ml={12} />
          <ToolSlot $ml={15} $w={20}><PauseGlyph /></ToolSlot>
          <ToolSlot $ml={8} $w={12}><Caret $c="#8a8a8a" /></ToolSlot>
          <ToolSep $ml={12} />
          <ToolSlot $ml={13} $w={24}><SendKeys /></ToolSlot>
          <ToolSep $ml={13} />
          <ToolSlot $ml={12} $w={24}><SnapClock plus /></ToolSlot>
          <ToolSlot $ml={13} $w={24}><SnapClock arrow dim /></ToolSlot>
          <ToolSlot $ml={12} $w={24}><SnapClock wrench /></ToolSlot>
          <ToolSep $ml={12} />
          <ToolSlot $ml={9} $w={30} $on><ViewSplit /></ToolSlot>
          <ToolSlot $ml={8} $w={24}><ViewBottom /></ToolSlot>
          <ToolSlot $ml={12} $w={24}><ViewFit /></ToolSlot>
          <ToolSlot $ml={13} $w={24}><ViewOff /></ToolSlot>
          <ToolSep $ml={12} />
          <ToolSlot $ml={10} $w={30} $on><ConsoleGlyph /></ToolSlot>
          <ToolSep $ml={9} />
          <ToolSlot $ml={12} $w={24}><FullScreen /></ToolSlot>
          <ToolSlot $ml={7} $w={12}><Caret $c="#8a8a8a" /></ToolSlot>
        </Toolbar>
        <WorkArea>
          <Library>
            <LibraryHead>
              Library
              <X size={15} strokeWidth={1.5} />
            </LibraryHead>
            <LibSearch>
              <Search size={16} strokeWidth={1.2} color="#8a8a8a" transform="scale(-1,1)" />
              <SearchHint>Type here to sea...</SearchHint>
              <Caret />
            </LibSearch>
            <TreeBox>
              <TreeRows>
                <TreeRoot>
                  <Expander><ExpanderBar /></Expander>
                  <Monitor size={18} strokeWidth={1.2} color="#8a8a8a" />
                  My Computer
                </TreeRoot>
                <TreeChild>
                  <GuestIcon />
                  <TreeSelected>Windows 10 and</TreeSelected>
                </TreeChild>
              </TreeRows>
              <TreeScroll><TreeThumb /></TreeScroll>
            </TreeBox>
          </Library>
          <VmView>
            <VmTabs>
              <VmTab $w={98}>
                <HomeIcon size={16} strokeWidth={1.2} color="#8f8f8f" />
                <VmTabLabel>Home</VmTabLabel>
                <VmTabClose><X size={15} strokeWidth={1.5} /></VmTabClose>
              </VmTab>
              <VmTab $active $w={250}>
                <GuestIcon />
                <VmTabLabel>Windows 10 and later x64 (4)</VmTabLabel>
                <VmTabClose><X size={15} strokeWidth={1.5} /></VmTabClose>
              </VmTab>
            </VmTabs>
            <Guest>
              <GuestBar>
                <ClockText>18 nov.  10:23</ClockText>
                <GuestTray>
                  <TrayPerson><PersonGlyph /></TrayPerson>
                  <NetGlyph />
                  <SpeakerGlyph />
                  <Power size={15} strokeWidth={2.2} />
                </GuestTray>
              </GuestBar>
              <LoginList>
                <UserCard $active>
                  <UserFace><PersonFace /></UserFace>
                  Matteo
                </UserCard>
                <UserCard>
                  <UserFace $c="#a347ba">M</UserFace>
                  Momo
                </UserCard>
                <NotListed>Absent de la liste ?</NotListed>
              </LoginList>
              <DebianMark>
                <DebianSwirl />
                <DebianWord>debian</DebianWord>
                <DebianNum>12</DebianNum>
              </DebianMark>
            </Guest>
          </VmView>
        </WorkArea>
        <StatusBar>
          <StatusMsg>To direct input to this VM, click inside or press Ctrl+G.</StatusMsg>
          <StatusIcons>
            <DeviceIcon><HddGlyph /><DeviceDot $c="#35d6c6" /></DeviceIcon>
            <DeviceIcon><HddGlyph /><DeviceDot /></DeviceIcon>
            <DeviceIcon><Disc3 size={18} strokeWidth={1.2} /><DeviceDot /></DeviceIcon>
            <DeviceIcon><NetBoxes /><DeviceDot /></DeviceIcon>
            <DeviceIcon><Printer size={18} strokeWidth={1.2} /></DeviceIcon>
            <DeviceIcon><SpeakerSmall /><DeviceDot /></DeviceIcon>
            <StatusSep />
            <NoteSquare />
          </StatusIcons>
          <Grip width="14" height="14" viewBox="0 0 14 14" stroke="#888">
            <path d="M0 14 14 0M5 14l9-9M10 14l4-4" />
          </Grip>
        </StatusBar>
      </VmWindow>
    </Screen>
  );
}
